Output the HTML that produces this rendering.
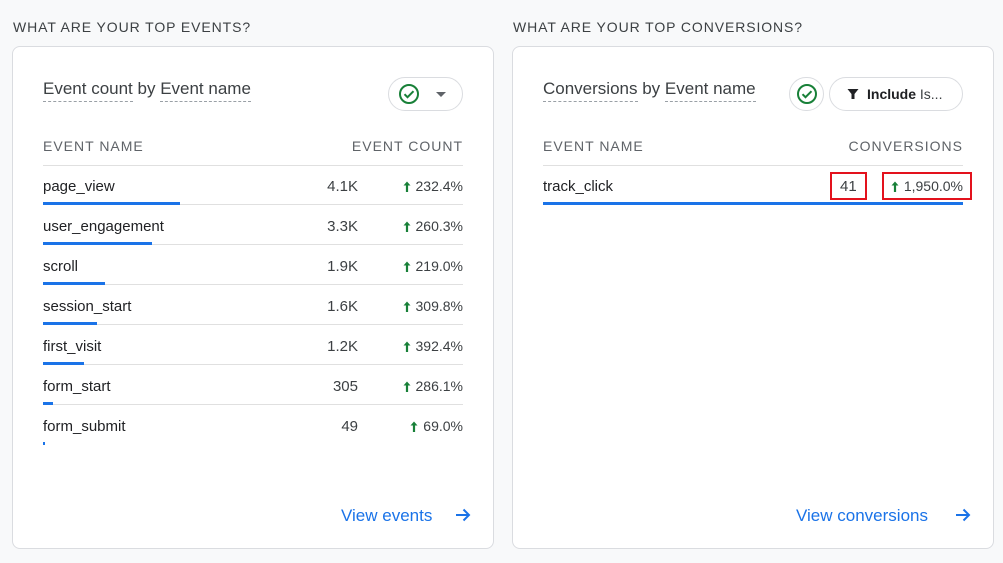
<!DOCTYPE html>
<html><head><style>
*{margin:0;padding:0;box-sizing:border-box}
body{width:1003px;height:563px;background:#f8f9fa;font-family:"Liberation Sans",sans-serif;position:relative;overflow:hidden;color:#202124}
.a{position:absolute;white-space:nowrap}
.h{font-size:14px;letter-spacing:0.9px;color:#3c4043;top:19px}
.card{position:absolute;top:46px;width:482px;height:503px;background:#fff;border:1px solid #dadce0;border-radius:8px}
.title{font-size:17px;color:#3c4043;top:79px}
.title u{text-decoration:none;border-bottom:1px dashed #9aa0a6;padding-bottom:3px}
.col{font-size:14px;letter-spacing:1px;color:#5f6368;top:138px}
.line{position:absolute;height:1px;background:#e0e0e0}
.bar{position:absolute;height:3px;background:#1a73e8}
.nm{font-size:15px;color:#202124}
.v{font-size:15px;color:#3c4043;text-align:right}
.p{font-size:14px;color:#3c4043;text-align:right}
.p svg{margin-right:5px;vertical-align:-1px}
.link{font-size:17px;color:#1a73e8;top:506px}
.pill{position:absolute;border:1px solid #dadce0;border-radius:17px;background:#fff}
</style></head><body>
<div class="a h" style="left:13px">WHAT ARE YOUR TOP EVENTS?</div>
<div class="a h" style="left:513px">WHAT ARE YOUR TOP CONVERSIONS?</div>
<div class="card" style="left:12px"></div>
<div class="card" style="left:512px"></div>

<div class="a title" style="left:43px"><u>Event count</u> by <u>Event name</u></div>
<div class="pill" style="left:388px;top:77px;width:75px;height:34px"></div>
<svg class="a" style="left:398px;top:83px" width="22" height="22" viewBox="0 0 22 22"><circle cx="11" cy="11" r="9" fill="none" stroke="#188038" stroke-width="2"/><path d="M6.5 11.2l3 3 6-6" fill="none" stroke="#188038" stroke-width="2"/></svg>
<svg class="a" style="left:436px;top:92px" width="10" height="6"><path d="M0 0h10L5 5z" fill="#5f6368"/></svg>
<div class="a col" style="left:43px">EVENT NAME</div>
<div class="a col" style="right:540px">EVENT COUNT</div>
<div class="line" style="left:43px;width:420px;top:165px"></div>

<div class="a title" style="left:543px"><u>Conversions</u> by <u>Event name</u></div>
<div class="pill" style="left:789px;top:77px;width:35px;height:34px"></div>
<svg class="a" style="left:796px;top:83px" width="22" height="22" viewBox="0 0 22 22"><circle cx="11" cy="11" r="9" fill="none" stroke="#188038" stroke-width="2"/><path d="M6.5 11.2l3 3 6-6" fill="none" stroke="#188038" stroke-width="2"/></svg>
<div class="pill" style="left:829px;top:77px;width:134px;height:34px"></div>
<svg class="a" style="left:846px;top:87px" width="14" height="14" viewBox="0 0 14 14"><path d="M1.5 2h11L8.5 7v5h-3V7z" fill="#202124"/></svg>
<div class="a" style="left:867px;top:86px;font-size:14px;color:#3c4043"><b style="color:#202124">Include</b> Is...</div>
<div class="a col" style="left:543px">EVENT NAME</div>
<div class="a col" style="right:40px">CONVERSIONS</div>
<div class="line" style="left:543px;width:420px;top:165px"></div>

<div class="a nm" style="left:543px;top:178px">track_click</div>
<div class="a" style="left:830px;top:172px;width:37px;height:28px;border:2px solid #e3121d"></div>
<div class="a v" style="left:840px;top:178px">41</div>
<div class="a" style="left:882px;top:172px;width:90px;height:28px;border:2px solid #e3121d"></div>
<div class="a p" style="right:40px;top:178px"><svg width="8" height="11" viewBox="0 0 8 11"><path d="M4 0.5L0.5 4.5h2.4V11h2.2V4.5h2.4z" fill="#188038"/></svg>1,950.0%</div>
<div class="bar" style="left:543px;width:420px;top:202px"></div>

<div class="a link" style="left:341px">View events</div>
<svg class="a" style="left:455px;top:508px" width="16" height="14" viewBox="0 0 16 14"><path d="M1 7h13M8.5 1.5L14 7l-5.5 5.5" fill="none" stroke="#1a73e8" stroke-width="2"/></svg>
<div class="a link" style="left:796px">View conversions</div>
<svg class="a" style="left:955px;top:508px" width="16" height="14" viewBox="0 0 16 14"><path d="M1 7h13M8.5 1.5L14 7l-5.5 5.5" fill="none" stroke="#1a73e8" stroke-width="2"/></svg>

<div id="rows"></div>
<script>
var d=[["page_view","4.1K","232.4%",137],["user_engagement","3.3K","260.3%",109],["scroll","1.9K","219.0%",62],["session_start","1.6K","309.8%",54],["first_visit","1.2K","392.4%",41],["form_start","305","286.1%",10],["form_submit","49","69.0%",2]];
var arr='<svg width="8" height="11" viewBox="0 0 8 11"><path d="M4 0.5L0.5 4.5h2.4V11h2.2V4.5h2.4z" fill="#188038"/></svg>';
var h="";d.forEach(function(r,i){var y=178+i*40;
h+='<div class="a nm" style="left:43px;top:'+y+'px">'+r[0]+'</div>';
h+='<div class="a v" style="right:645px;top:'+y+'px">'+r[1]+'</div>';
h+='<div class="a p" style="right:540px;top:'+y+'px">'+arr+r[2]+'</div>';
h+='<div class="bar" style="left:43px;width:'+r[3]+'px;top:'+(y+24)+'px"></div>';
if(i<6)h+='<div class="line" style="left:'+(43+r[3])+'px;width:'+(420-r[3])+'px;top:'+(y+26)+'px"></div>';});
document.getElementById("rows").innerHTML=h;
</script>
</body></html>
